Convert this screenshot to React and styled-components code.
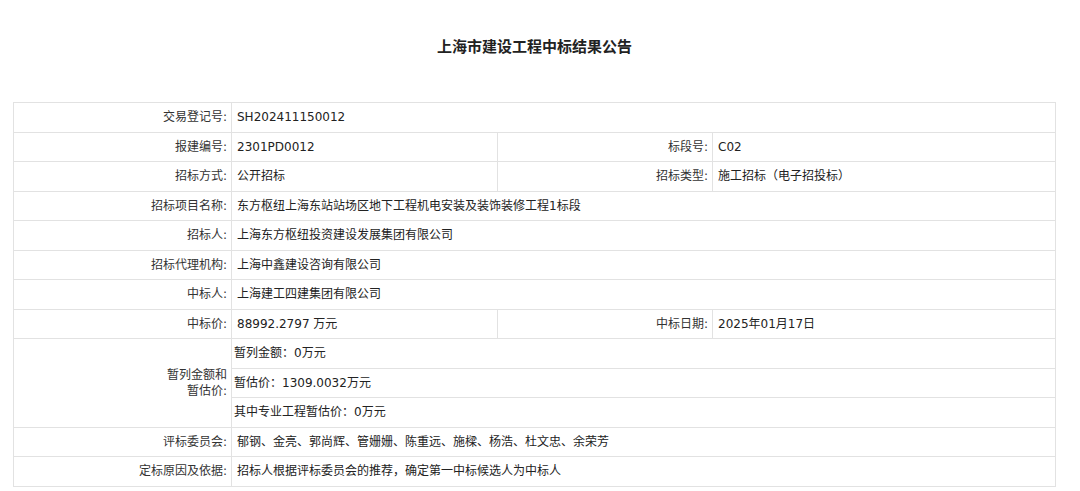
import React from "react";
import styled, { createGlobalStyle } from "styled-components";

const G = createGlobalStyle`
  body { margin: 0; background: #fff; font-family: "DejaVu Sans", "Noto Sans CJK SC", sans-serif; color: #333; }
`;
const Page = styled.div` padding: 35px 24px 0 13px; `;
const Title = styled.h1`
  margin: 0 0 45px; text-align: center; font-size: 15px; font-weight: bold; color: #222; line-height: 22px;
  font-family: "Noto Sans CJK SC", sans-serif;
`;
const Table = styled.table`
  width: 1043px; border-collapse: collapse; table-layout: fixed; font-size: 12px;
  td { border: 1px solid #e2e2e2; height: 28.5px; padding: 0 5px; line-height: 16px; }
`;
const L = styled.td` text-align: right; color: #333; padding-right: 4px !important; `;
const V = styled.td` text-align: left; color: #222; `;

export default function App() {
  return (
    <Page>
      <G />
      <Title>上海市建设工程中标结果公告</Title>
      <Table>
        <colgroup><col style={{ width: 218 }} /><col style={{ width: 266 }} /><col style={{ width: 215 }} /><col /></colgroup>
        <tbody>
          <tr><L>交易登记号:</L><V colSpan={3}>SH202411150012</V></tr>
          <tr><L>报建编号:</L><V>2301PD0012</V><L>标段号:</L><V>C02</V></tr>
          <tr><L>招标方式:</L><V>公开招标</V><L>招标类型:</L><V>施工招标（电子招投标）</V></tr>
          <tr><L>招标项目名称:</L><V colSpan={3}>东方枢纽上海东站站场区地下工程机电安装及装饰装修工程1标段</V></tr>
          <tr><L>招标人:</L><V colSpan={3}>上海东方枢纽投资建设发展集团有限公司</V></tr>
          <tr><L>招标代理机构:</L><V colSpan={3}>上海中鑫建设咨询有限公司</V></tr>
          <tr><L>中标人:</L><V colSpan={3}>上海建工四建集团有限公司</V></tr>
          <tr><L>中标价:</L><V>88992.2797 万元</V><L>中标日期:</L><V>2025年01月17日</V></tr>
          <tr><L rowSpan={3}>暂列金额和<br />暂估价:</L><V colSpan={3} style={{ padding: "0 2px" }}>暂列金额：0万元</V></tr>
          <tr><V colSpan={3} style={{ padding: "0 2px" }}>暂估价：1309.0032万元</V></tr>
          <tr><V colSpan={3} style={{ padding: "0 2px" }}>其中专业工程暂估价：0万元</V></tr>
          <tr><L>评标委员会:</L><V colSpan={3}>郁钢、金亮、郭尚辉、管姗姗、陈重远、施樑、杨浩、杜文忠、余荣芳</V></tr>
          <tr><L>定标原因及依据:</L><V colSpan={3}>招标人根据评标委员会的推荐，确定第一中标候选人为中标人</V></tr>
        </tbody>
      </Table>
    </Page>
  );
}
